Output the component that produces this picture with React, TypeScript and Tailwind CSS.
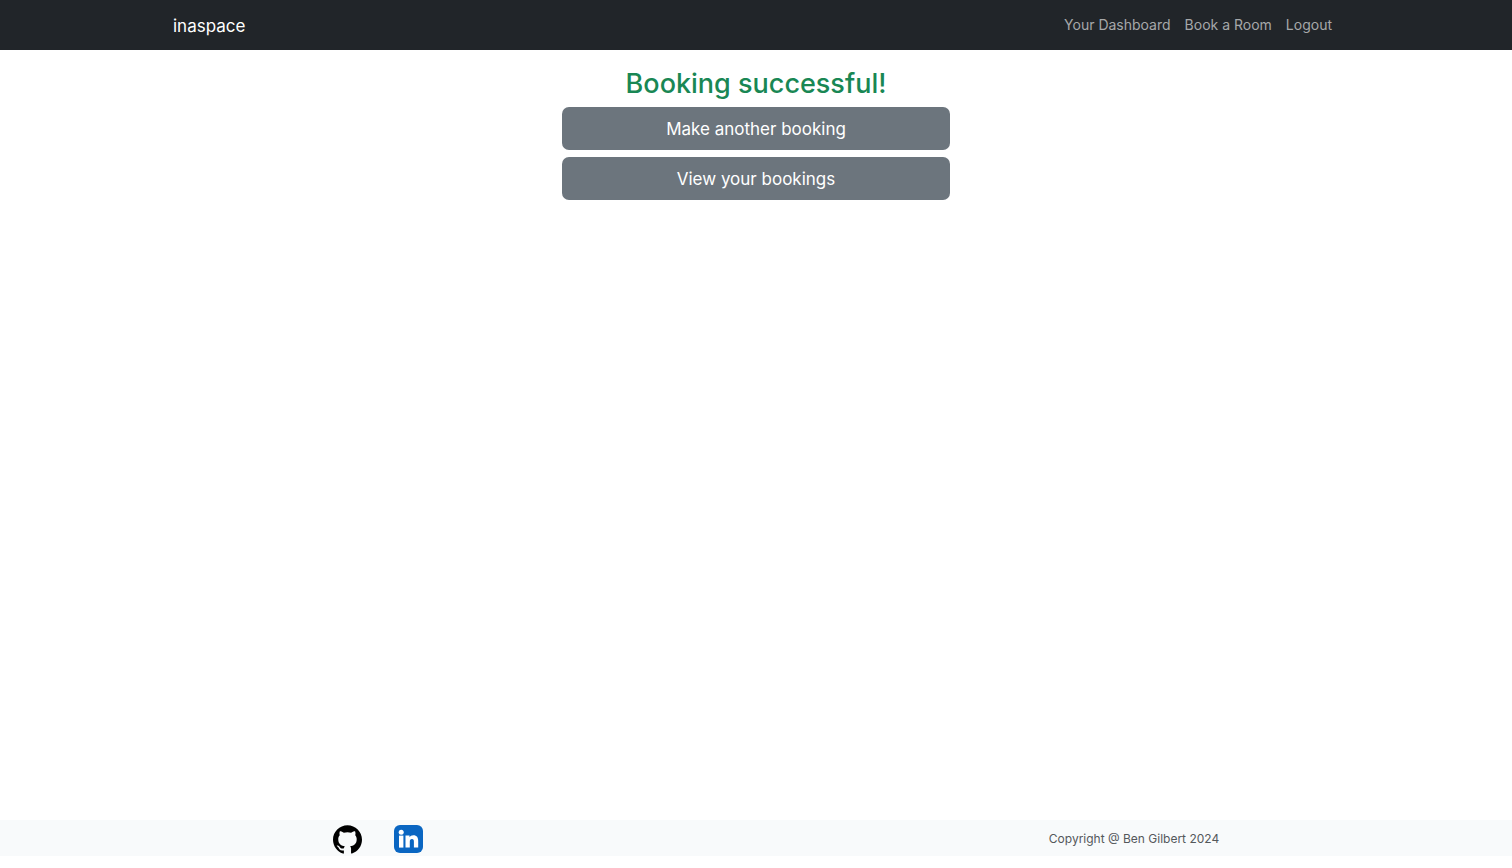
import { SiGithub } from "react-icons/si";

const navLinks = ["Your Dashboard", "Book a Room", "Logout"];
const actions = ["Make another booking", "View your bookings"];

function LinkedInIcon() {
  return (
    <svg viewBox="0 0 29 28" className="h-7 w-[29px]" aria-hidden="true">
      <rect width="29" height="28" rx="6" fill="#0a66c2" />
      <g fill="#fff">
        <circle cx="7.2" cy="7.2" r="2.5" />
        <path d="M5 10.600h4.400V22.600H5z" />
        <path d="M11.500 10.600h4v1.600c.7-1.100 2-1.900 3.800-1.900 3.700 0 4.900 2.300 4.900 5.700v6.600h-4.300v-5.900c0-1.700-.4-2.700-1.900-2.700-1.600 0-2.200 1.100-2.200 2.700v5.900h-4.300z" />
      </g>
    </svg>
  );
}

export default function App() {
  return (
    <div className="flex min-h-screen flex-col bg-white pb-3 font-['Inter',sans-serif] text-[#212529]">
      <nav className="bg-[#212529]">
        <div className="mx-auto flex h-[50px] max-w-[1188px] items-center justify-between px-[11px]">
          <a href="#" className="pt-0.5 text-[17px] leading-6 text-white">
            inaspace
          </a>
          <ul className="flex text-[14px] leading-5 text-[#a6a8a9]">
            {navLinks.map((label) => (
              <li key={label}>
                <a href="#" className="px-[7px]">
                  {label}
                </a>
              </li>
            ))}
          </ul>
        </div>
      </nav>

      <main className="mx-auto flex w-full max-w-[388px] grow flex-col gap-[7px] pt-[18px]">
        <h1 className="text-center text-[27px] leading-8 font-medium text-[#198754]">
          Booking successful!
        </h1>
        {actions.map((label) => (
          <button
            key={label}
            type="button"
            className="h-[43px] w-full rounded-[7px] bg-[#6c757d] text-[17px] leading-7 text-white"
          >
            {label}
          </button>
        ))}
      </main>

      <footer className="grid h-9 grid-cols-2 items-center bg-[#f8fafb] pt-0.5">
        <div className="flex items-center justify-center gap-8">
          <a href="#" aria-label="GitHub">
            <SiGithub className="size-[29px] text-black" />
          </a>
          <a href="#" aria-label="LinkedIn">
            <LinkedInIcon />
          </a>
        </div>
        <p className="text-center text-[12px] leading-4 text-[#54585b]">Copyright @ Ben Gilbert 2024</p>
      </footer>
    </div>
  );
}
